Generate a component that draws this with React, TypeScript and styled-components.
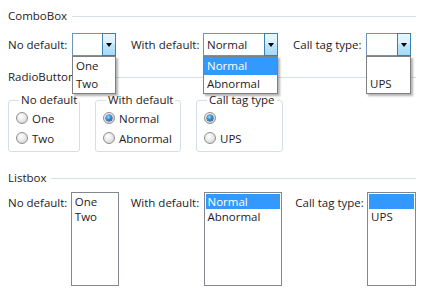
import React from "react";
import styled, { createGlobalStyle } from "styled-components";

const Global = createGlobalStyle`
  html, body { margin: 0; padding: 0; background: #fff; }
  body { font-family: "Open Sans", "Noto Sans", sans-serif; font-size: 11.5px; color: #1f1a24; }
  * { box-sizing: border-box; }
`;

const Page = styled.div`
  width: 430px;
  height: 300px;
  padding: 8px 14px 0 8px;
  overflow: hidden;
`;

const Header = styled.div<{ $mt: number }>`
  display: flex;
  align-items: center;
  height: 16px;
  margin-top: ${(p) => p.$mt}px;
  line-height: 16px;
  white-space: nowrap;
`;

const HeaderRule = styled.div`
  flex: 1;
  height: 1px;
  margin-left: 5px;
  background: #d5dfe5;
`;

const Row = styled.div<{ $mt: number; $align?: string }>`
  display: flex;
  align-items: ${(p) => p.$align || "center"};
  margin-top: ${(p) => p.$mt}px;
`;

const Label = styled.div<{ $w: number; $ml?: number; $pt?: number }>`
  width: ${(p) => p.$w}px;
  margin-left: ${(p) => p.$ml || 0}px;
  padding-top: ${(p) => p.$pt || 0}px;
  line-height: 15px;
  white-space: nowrap;
`;

const ComboWrap = styled.div<{ $w: number }>`
  position: relative;
  width: ${(p) => p.$w}px;
  height: 23px;
  display: flex;
  border: 1px solid #6e94bd;
  background: #fff;
`;

const ComboValue = styled.div`
  flex: 1;
  padding-left: 3px;
  line-height: 21px;
  white-space: nowrap;
  overflow: hidden;
`;

const ComboButton = styled.div`
  width: 14px;
  margin: -1px -1px -1px 0;
  border: 1px solid #3c7fb1;
  background: linear-gradient(#eaf6fd 0%, #d9f0fc 45%, #bee6fd 50%, #a7d9f5 100%);
  display: flex;
  align-items: center;
  justify-content: center;
`;

const Arrow = styled.div`
  width: 0;
  height: 0;
  border-left: 3.5px solid transparent;
  border-right: 3.5px solid transparent;
  border-top: 4px solid #000;
  margin-top: 1px;
`;

const DropList = styled.div`
  position: absolute;
  left: -1px;
  top: 22px;
  right: -1px;
  z-index: 10;
  background: #fff;
  border: 1px solid #808080;
  box-shadow: 2px 2px 2px rgba(0, 0, 0, 0.3);
`;

const DropItem = styled.div<{ $sel?: boolean }>`
  height: 18px;
  line-height: 18px;
  padding-left: 3px;
  background: ${(p) => (p.$sel ? "#3399ff" : "transparent")};
  color: ${(p) => (p.$sel ? "#fff" : "inherit")};
  white-space: nowrap;
`;

const GroupRow = styled.div`
  display: flex;
  gap: 15px;
  margin-top: 7px;
`;

const Group = styled.fieldset<{ $w: number }>`
  width: ${(p) => p.$w}px;
  margin: 0;
  padding: 0 0 3px 0;
  min-width: 0;
  border: 1px solid #d5dfe5;
  border-radius: 3px;
`;

const Legend = styled.legend`
  margin-left: 10px;
  padding: 0 2px;
  line-height: 16px;
  white-space: nowrap;
`;

const RadioRow = styled.div`
  display: flex;
  align-items: center;
  gap: 4px;
  height: 20px;
  padding-left: 7px;
  white-space: nowrap;
`;

const RadioCircle = styled.span<{ $checked?: boolean }>`
  position: relative;
  width: 12px;
  height: 12px;
  border-radius: 50%;
  border: 1px solid #8e8f8f;
  background: radial-gradient(circle at 40% 35%, #ffffff 0%, #eaeaea 45%, #c9c9c9 100%);
  flex: none;
  &::after {
    content: "";
    display: ${(p) => (p.$checked ? "block" : "none")};
    position: absolute;
    left: 2px;
    top: 2px;
    width: 6px;
    height: 6px;
    border-radius: 50%;
    background: radial-gradient(circle at 40% 35%, #9fe0ff 0%, #2b8fd8 45%, #0d3f7a 100%);
    box-shadow: 0 0 0 0.5px #0b3c70;
  }
`;

const ListBox = styled.div<{ $w: number }>`
  width: ${(p) => p.$w}px;
  height: 94px;
  border: 1px solid #828790;
  padding: 1px;
  background: #fff;
`;

const ListItem = styled.div<{ $sel?: boolean }>`
  height: 15px;
  line-height: 15px;
  padding-left: 2px;
  background: ${(p) => (p.$sel ? "#3399ff" : "transparent")};
  color: ${(p) => (p.$sel ? "#fff" : "inherit")};
  white-space: nowrap;
`;

type ComboProps = { w: number; value: string; items: string[]; selected?: number };

function Combo({ w, value, items, selected }: ComboProps) {
  return (
    <ComboWrap $w={w}>
      <ComboValue>{value}</ComboValue>
      <ComboButton>
        <Arrow />
      </ComboButton>
      <DropList>
        {items.map((it, i) => (
          <DropItem key={i} $sel={i === selected}>
            {it}
          </DropItem>
        ))}
      </DropList>
    </ComboWrap>
  );
}

function SectionHeader({ title, mt }: { title: string; mt: number }) {
  return (
    <Header $mt={mt}>
      <span>{title}</span>
      <HeaderRule />
    </Header>
  );
}

type RadioItem = { label: string; checked?: boolean };

function RadioGroup({ w, title, items }: { w: number; title: string; items: RadioItem[] }) {
  return (
    <Group $w={w}>
      <Legend>{title}</Legend>
      {items.map((it, i) => (
        <RadioRow key={i}>
          <RadioCircle $checked={it.checked} />
          {it.label && <span>{it.label}</span>}
        </RadioRow>
      ))}
    </Group>
  );
}

function List({ w, items, selected }: { w: number; items: string[]; selected?: number }) {
  return (
    <ListBox $w={w}>
      {items.map((it, i) => (
        <ListItem key={i} $sel={i === selected}>
          {it}
        </ListItem>
      ))}
    </ListBox>
  );
}

export default function App() {
  return (
    <>
      <Global />
      <Page>
        <SectionHeader title="ComboBox" mt={0} />
        <Row $mt={9}>
          <Label $w={64}>No default:</Label>
          <Combo w={44} value="" items={["One", "Two"]} />
          <Label $w={72} $ml={15}>With default:</Label>
          <Combo w={75} value="Normal" items={["Normal", "Abnormal"]} selected={0} />
          <Label $w={73} $ml={15}>Call tag type:</Label>
          <Combo w={45} value="" items={["", "UPS"]} />
        </Row>

        <SectionHeader title="RadioButton" mt={13} />
        <GroupRow>
          <RadioGroup w={72} title="No default" items={[{ label: "One" }, { label: "Two" }]} />
          <RadioGroup
            w={86}
            title="With default"
            items={[{ label: "Normal", checked: true }, { label: "Abnormal" }]}
          />
          <RadioGroup
            w={87}
            title="Call tag type"
            items={[{ label: "", checked: true }, { label: "UPS" }]}
          />
        </GroupRow>

        <SectionHeader title="Listbox" mt={18} />
        <Row $mt={6} $align="flex-start">
          <Label $w={63} $pt={3}>No default:</Label>
          <List w={48} items={["One", "Two"]} />
          <Label $w={73} $ml={12} $pt={3}>With default:</Label>
          <List w={79} items={["Normal", "Abnormal"]} selected={0} />
          <Label $w={72} $ml={13} $pt={3}>Call tag type:</Label>
          <List w={49} items={["", "UPS"]} selected={0} />
        </Row>
      </Page>
    </>
  );
}
